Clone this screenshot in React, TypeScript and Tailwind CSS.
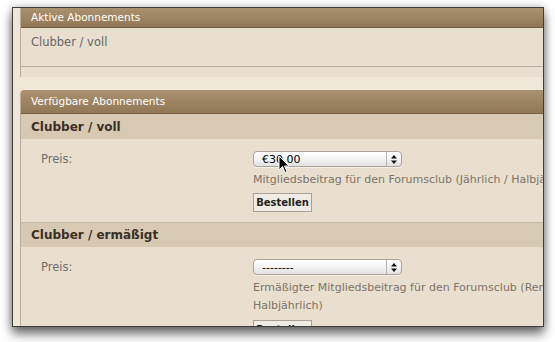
import React from "react";

const font = { fontFamily: '"DejaVu Sans", Verdana, sans-serif' };

function Select({ value }: { value: string }) {
  return (
    <div className="flex h-[16px] w-[149px] items-stretch rounded-[4px] border border-[#a9a49c] bg-gradient-to-b from-[#ffffff] via-[#f4f4f4] to-[#e2e2e2] shadow-[0_1px_0_rgba(255,255,255,0.5)]">
      <div className="flex flex-1 items-center pl-[8px] text-[11px] leading-none text-black">{value}</div>
      <div className="w-px bg-[#b8b4ad]" />
      <div className="flex w-[14px] items-center justify-center">
        <svg width="6" height="9" viewBox="0 0 6 9">
          <path d="M3 0 L6 3.5 L0 3.5 Z" fill="#111" />
          <path d="M3 9 L6 5.5 L0 5.5 Z" fill="#111" />
        </svg>
      </div>
    </div>
  );
}

function Button() {
  return (
    <div className="flex h-[19px] w-[59px] items-center justify-center border border-[#aaa196] bg-[#efece6] text-[10px] font-bold text-[#222]">
      Bestellen
    </div>
  );
}

function Header({ title, h }: { title: string; h: string }) {
  return (
    <div
      className={`flex items-center ${h} border-b border-[#75603f] bg-gradient-to-b from-[#ab926f] to-[#917756] pl-[10px] text-[10.5px] text-white`}
    >
      {title}
    </div>
  );
}

export default function App() {
  return (
    <div className="h-[342px] w-[555px] overflow-hidden bg-white pl-[12px] pt-[7px]" style={font}>
      <div className="relative h-[320px] w-[532px] overflow-hidden border border-[#3f3d3a] bg-[#efe7d8] shadow-[0_7px_10px_rgba(0,0,0,0.55),0_0_8px_rgba(0,0,0,0.25)]">
        <div className="pl-[7px]">
          {/* Aktive Abonnements */}
          <div className="w-[560px] border-l border-[#b9ad9c]">
            <Header title="Aktive Abonnements" h="h-[20px]" />
            <div className="h-[39px] border-b border-[#b9aea4] bg-[#e8dfcf] pl-[10px] pt-[6px] text-[11.5px] leading-[16px] text-[#666]">
              Clubber / voll
            </div>
            <div className="h-[10px] bg-[#e8dfce]" />
          </div>

          <div className="h-[13px]" />

          {/* Verfügbare Abonnements */}
          <div className="w-[560px] overflow-hidden rounded-tl-[4px] border-l border-[#b9ad9c]">
            <Header title="Verfügbare Abonnements" h="h-[24px]" />

            <div className="flex h-[25px] items-center bg-[#d8c9b2] pl-[10px] text-[12px] font-bold text-[#3a3026]">
              Clubber / voll
            </div>
            <div className="flex border-b border-[#c5b9a8] bg-[#e8dfcf] pb-[10px] pt-[12px]">
              <div className="w-[232px] shrink-0 pl-[20px] text-[11.5px] leading-[16px] text-[#6e6e6e]">Preis:</div>
              <div className="flex min-w-0 flex-col">
                <Select value="€30,00" />
                <div className="mt-[4px] whitespace-nowrap text-[11px] leading-[18px] text-[#7d7468]">
                  Mitgliedsbeitrag für den Forumsclub (Jährlich / Halbjährlich)
                </div>
                <div className="mt-[4px]">
                  <Button />
                </div>
              </div>
            </div>

            <div className="flex h-[24px] items-center bg-[#d8c9b2] pl-[10px] text-[12px] font-bold text-[#3a3026]">
              Clubber / ermäßigt
            </div>
            <div className="flex bg-[#e8dfcf] pb-[10px] pt-[12px]">
              <div className="w-[232px] shrink-0 pl-[20px] text-[11.5px] leading-[16px] text-[#6e6e6e]">Preis:</div>
              <div className="flex min-w-0 flex-col">
                <Select value="--------" />
                <div className="mt-[4px] whitespace-nowrap text-[11px] leading-[18px] text-[#7d7468]">
                  Ermäßigter Mitgliedsbeitrag für den Forumsclub (Rentner / Studenten, Jährlich /
                  <br />
                  Halbjährlich)
                </div>
                <div className="mt-[5px]">
                  <Button />
                </div>
              </div>
            </div>
          </div>
        </div>

        {/* mouse cursor */}
        <svg
          className="absolute left-[265px] top-[147px]"
          width="12"
          height="19"
          viewBox="0 0 12 19"
        >
          <path
            d="M1 1 L1 15 L4.5 11.5 L7 17.5 L9 16.7 L6.6 11 L11 11 Z"
            fill="#000"
            stroke="#fff"
            strokeWidth="1"
            strokeLinejoin="round"
          />
        </svg>
      </div>
    </div>
  );
}
